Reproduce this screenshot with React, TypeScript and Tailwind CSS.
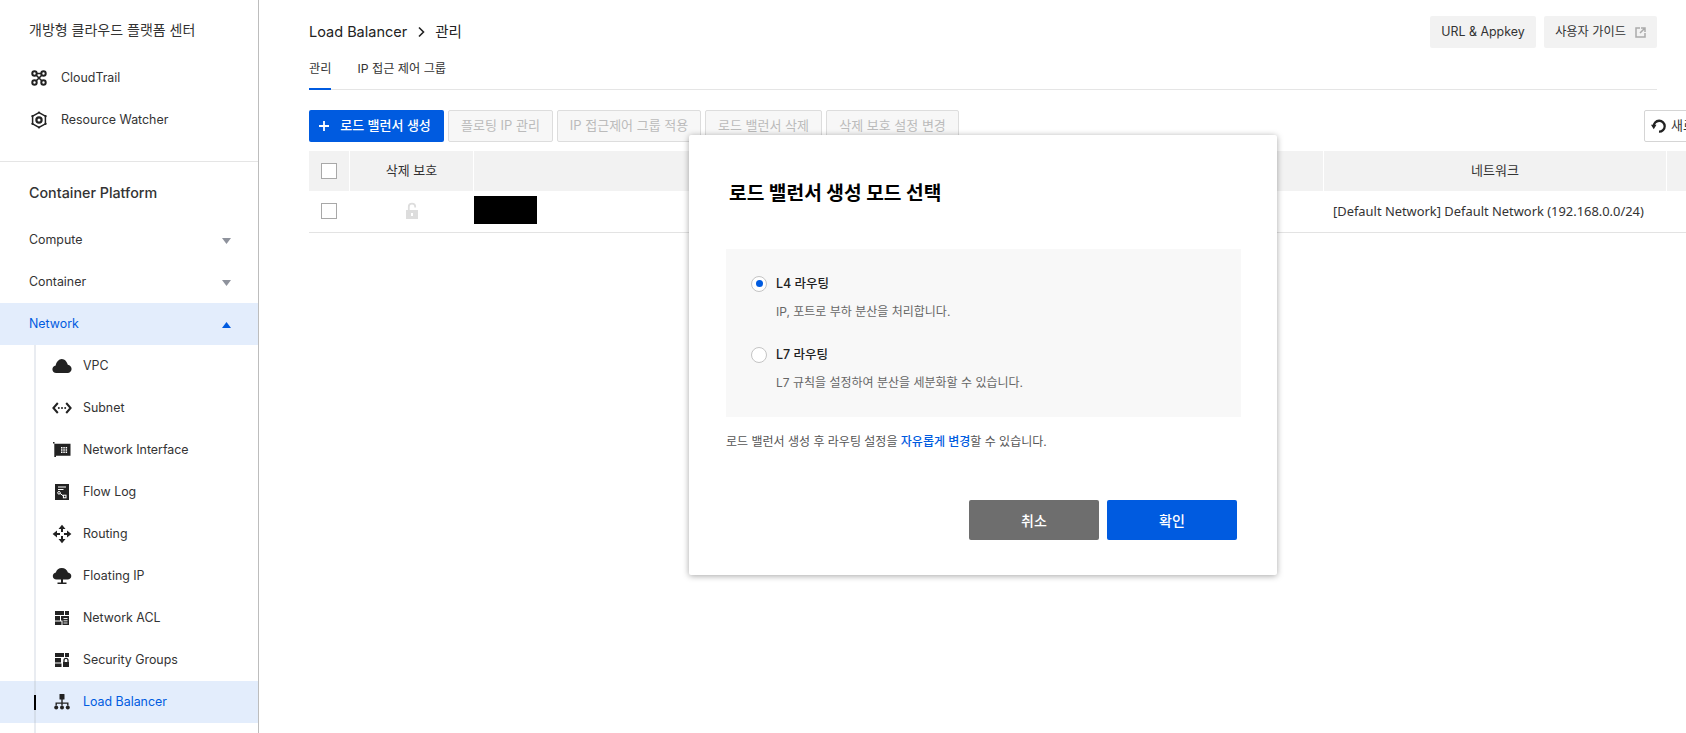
import type { ReactNode } from "react";

const FONT = "font-['Inter','Noto_Sans_CJK_KR',sans-serif]";

const ink = "#222222";

function CloudTrailIcon() {
  return (
    <svg width="18" height="18" viewBox="0 0 18 18" fill="none" stroke={ink} strokeWidth="2">
      <circle cx="4.500" cy="4.500" r="2.200" />
      <circle cx="13.500" cy="4.500" r="2.200" />
      <circle cx="4.500" cy="13.500" r="2.200" />
      <circle cx="13.500" cy="13.500" r="2.200" />
      <path d="M6.500 4.500h5M6 12l6-6M6 6l6 6" strokeWidth="1.600" />
    </svg>
  );
}

function WatcherIcon() {
  return (
    <svg width="18" height="18" viewBox="0 0 18 18" fill="none" stroke={ink}>
      <path d="M9 1.600 15.400 5.200v7.600L9 16.400 2.600 12.800V5.200z" strokeWidth="1.500" />
      <circle cx="9" cy="9" r="2.600" strokeWidth="2.200" />
      <circle cx="9" cy="1.500" r="1.100" fill={ink} stroke="none" />
      <circle cx="9" cy="16.500" r="1.100" fill={ink} stroke="none" />
      <circle cx="2.400" cy="5.200" r="1.100" fill={ink} stroke="none" />
      <circle cx="15.600" cy="5.200" r="1.100" fill={ink} stroke="none" />
      <circle cx="2.400" cy="12.800" r="1.100" fill={ink} stroke="none" />
      <circle cx="15.600" cy="12.800" r="1.100" fill={ink} stroke="none" />
    </svg>
  );
}

function CloudIcon() {
  return (
    <svg width="20" height="18" viewBox="0 0 20 18" fill={ink}>
      <path d="M4.200 16C2 16 .4 14.300.4 12.200c0-2 1.400-3.500 3.300-3.800C4.200 5.200 6.800 2 9.800 2c3 0 5.300 2.900 6 5.800 2.200.3 3.800 2 3.800 4.200 0 2.300-1.800 4-4 4z" />
    </svg>
  );
}

function SubnetIcon() {
  return (
    <svg width="20" height="18" viewBox="0 0 20 18" fill="none" stroke={ink} strokeWidth="2">
      <path d="M5.800 4 1.400 9l4.400 5M14.200 4l4.400 5-4.400 5" />
      <circle cx="6.800" cy="9" r="1" fill={ink} stroke="none" />
      <circle cx="10" cy="9" r="1" fill={ink} stroke="none" />
      <circle cx="13.200" cy="9" r="1" fill={ink} stroke="none" />
    </svg>
  );
}

function InterfaceIcon() {
  return (
    <svg width="18" height="18" viewBox="0 0 18 18">
      <path d="M0 1h1.500v1.700H17.500v12H3v1.300H1.300V2.500H0z" fill={ink} />
      <path
        d="M8 6h1.500v1.500H8zM10.300 6h1.500v1.500h-1.500zM12.600 6h1.500v1.500h-1.500zM8 8.200h1.500v1.500H8zM10.300 8.200h1.500v1.500h-1.500zM12.600 8.200h1.500v1.500h-1.500zM8 10.400h1.500v1.500H8zM10.300 10.400h1.500v1.500h-1.500zM12.600 10.400h1.500v1.500h-1.500z"
        fill="#ffffff"
      />
    </svg>
  );
}

function FlowLogIcon() {
  return (
    <svg width="18" height="18" viewBox="0 0 18 18">
      <rect x="2" y="1" width="14" height="16" fill={ink} />
      <path d="M5 4h8M5 6.500h5.500" stroke="#ffffff" strokeWidth="1.100" />
      <path d="M6 9.500 11 13.500" stroke="#ffffff" strokeWidth="1" />
      <circle cx="6" cy="9.800" r="1.300" fill={ink} stroke="#ffffff" />
      <rect x="10.400" y="12.200" width="2.600" height="2.600" fill={ink} stroke="#ffffff" />
    </svg>
  );
}

function RoutingIcon() {
  return (
    <svg width="20" height="20" viewBox="0 0 20 20" fill={ink}>
      <path d="M10 .8 13.500 5h-7zM10 19.200 6.500 15h7zM.6 10 5 6.500v7zM19.400 10 15 13.500v-7z" />
      <path d="M9 4h2v4H9zM9 12h2v4H9zM4 9h4v2H4zM12 9h4v2h-4z" />
    </svg>
  );
}

function FloatingIpIcon() {
  return (
    <svg width="20" height="18" viewBox="0 0 20 18" fill={ink}>
      <path d="M4.500 12.500C2.300 12.500.8 11 .8 9c0-1.900 1.300-3.300 3-3.600C4.400 3 6.800 1 9.800 1s5.400 2 6.100 4.400c1.900.2 3.400 1.700 3.400 3.600 0 2-1.600 3.500-3.700 3.500z" />
      <path d="M9 12h2v3.500H9zM5.500 15.500h9V17h-9z" />
    </svg>
  );
}

function AclIcon() {
  return (
    <svg width="18" height="18" viewBox="0 0 18 18" fill={ink}>
      <path d="M2 2h9v4H2zM12 2h4v4h-4zM2 7h5v4.500H2zM2 12.500h6.500V16H2z" />
      <path d="M8 7h8v9h-6.500v-4.500H8z" />
      <path d="M10.500 9.500h4M10.500 11.800h4M10.500 14h4" stroke="#ffffff" strokeWidth=".9" />
    </svg>
  );
}

function SecurityIcon() {
  return (
    <svg width="18" height="18" viewBox="0 0 18 18" fill={ink}>
      <path d="M2 2h9v4H2zM12 2h4v4h-4zM2 7h6v4.500H2zM2 12.500h6.500V16H2z" />
      <rect x="10" y="11" width="6" height="5" />
      <path d="M11 11V9.300c0-1.200.9-2 2-2s2 .8 2 2V11" fill="none" stroke={ink} strokeWidth="1.300" />
    </svg>
  );
}

function BalancerIcon() {
  return (
    <svg width="18" height="18" viewBox="0 0 18 18" fill={ink}>
      <rect x="6.500" y="1" width="5" height="5.500" rx=".6" />
      <path d="M8.300 6h1.400v3.500h5.800v3h-1.400v-1.700H9.700v1.700H8.300v-1.700H3.900v1.700H2.500v-3h5.800z" />
      <circle cx="3.200" cy="14.500" r="2" />
      <circle cx="9" cy="14.500" r="2" />
      <circle cx="14.800" cy="14.500" r="2" />
    </svg>
  );
}

function Caret({ up, color }: { up?: boolean; color: string }) {
  return (
    <svg width="9" height="6" viewBox="0 0 9 6" fill={color}>
      <path d={up ? "M4.500 0 9 6H0z" : "M0 0h9L4.500 6z"} />
    </svg>
  );
}

function Checkbox() {
  return <span className="block h-[16px] w-[16px] border border-[#a8a8a8] bg-white" />;
}

function MenuRow({ label, open, active }: { label: string; open?: boolean; active?: boolean }) {
  return (
    <div
      className={`flex h-[42px] items-center justify-between pl-[29px] pr-[27px] pt-[1px] text-[12.4px] ${
        active ? "bg-[#e3edfc] text-[#005be0]" : "text-[#333333]"
      }`}
    >
      <span>{label}</span>
      <Caret up={open} color={active ? "#005be0" : "#8e929c"} />
    </div>
  );
}

function SubRow({ icon, label, active }: { icon: ReactNode; label: string; active?: boolean }) {
  return (
    <div className={`relative flex h-[42px] pl-[34px] ${active ? "bg-[#e3edfc]" : ""}`}>
      <div
        className={`flex h-full items-center border-l-2 ${
          active ? "border-[#d5deea] text-[#005be0]" : "border-[#e9ecf1] text-[#333333]"
        } text-[12.4px]`}
      >
        <span className="flex w-[47px] items-center justify-center pl-[4px]">{icon}</span>
        <span>{label}</span>
      </div>
      {active && <span className="absolute left-[34px] top-[14px] h-[15px] w-[2px] bg-black" />}
    </div>
  );
}

function Sidebar() {
  return (
    <aside className="h-[733px] w-[259px] shrink-0 overflow-hidden border-r border-[#bdbdbd]">
      <div className="h-[57px] pl-[29px] pt-[20px] text-[14px] leading-[20px] text-[#333333]">
        개방형 클라우드 플랫폼 센터
      </div>
      <div className="flex h-[42px] items-center text-[12.4px] text-[#333333]">
        <span className="flex w-[61px] justify-center pl-[17px]">
          <CloudTrailIcon />
        </span>
        CloudTrail
      </div>
      <div className="flex h-[42px] items-center text-[12.4px] text-[#333333]">
        <span className="flex w-[61px] justify-center pl-[17px]">
          <WatcherIcon />
        </span>
        Resource Watcher
      </div>
      <div className="mt-[20px] h-px bg-[#e5e5e5]" />
      <div className="h-[57px] pl-[29px] pt-[20px] text-[14.3px] font-medium leading-[22px] text-[#333333]">
        Container Platform
      </div>
      <MenuRow label="Compute" />
      <MenuRow label="Container" />
      <MenuRow label="Network" open active />
      <SubRow icon={<CloudIcon />} label="VPC" />
      <SubRow icon={<SubnetIcon />} label="Subnet" />
      <SubRow icon={<InterfaceIcon />} label="Network Interface" />
      <SubRow icon={<FlowLogIcon />} label="Flow Log" />
      <SubRow icon={<RoutingIcon />} label="Routing" />
      <SubRow icon={<FloatingIpIcon />} label="Floating IP" />
      <SubRow icon={<AclIcon />} label="Network ACL" />
      <SubRow icon={<SecurityIcon />} label="Security Groups" />
      <SubRow icon={<BalancerIcon />} label="Load Balancer" active />
      <SubRow icon={null} label="" />
    </aside>
  );
}

function DisabledButton({ label, width }: { label: string; width: string }) {
  return (
    <button
      className={`h-[32px] rounded-[2px] border border-[#dddddd] bg-[#f7f7f7] text-[13px] text-[#bbbbbb] ${width}`}
    >
      {label}
    </button>
  );
}

function Table() {
  return (
    <div className="mt-[9px] w-[1500px]">
      <div className="flex h-[40px] items-center gap-px text-[13px] text-[#333333]">
        <div className="flex h-full w-[40px] items-center justify-center bg-[#f2f2f2]">
          <Checkbox />
        </div>
        <div className="flex h-full w-[123px] items-center justify-center bg-[#f2f2f2]">삭제 보호</div>
        <div className="h-full w-[849px] bg-[#f2f2f2]" />
        <div className="flex h-full w-[342px] items-center justify-center bg-[#f2f2f2]">네트워크</div>
        <div className="h-full flex-1 bg-[#f2f2f2]" />
      </div>
      <div className="flex h-[42px] items-center gap-px border-b border-[#e3e3e3] text-[13px] text-[#333333]">
        <div className="mb-[2px] flex w-[40px] justify-center">
          <Checkbox />
        </div>
        <div className="mb-[1px] flex w-[123px] justify-center">
          <svg width="16" height="18" viewBox="0 0 16 18" fill="#dddddd">
            <path d="M2 8h12v9H2z" />
            <path d="M4.800 8V4.800C4.800 3 6.200 1.700 8 1.700s3.200 1.300 3.200 3.100v.7" fill="none" stroke="#dddddd" strokeWidth="1.800" />
            <rect x="7" y="11" width="2" height="3" fill="#ffffff" />
          </svg>
        </div>
        <div className="h-full w-[849px] pt-[5px]">
          <div className="h-[28px] w-[63px] bg-black" />
        </div>
        <div className="w-[342px] pl-[9px] pt-[1px] font-['Noto_Sans','Noto_Sans_CJK_KR',sans-serif] text-[12.9px]">
          [Default Network] Default Network (192.168.0.0/24)
        </div>
      </div>
    </div>
  );
}

function Radio({ checked }: { checked?: boolean }) {
  return (
    <span className="flex h-[16px] w-[16px] items-center justify-center rounded-full border border-[#c4c4c4] bg-white">
      {checked && <span className="h-[7px] w-[7px] rounded-full bg-[#005be0]" />}
    </span>
  );
}

function RoutingOption({ title, desc, checked }: { title: string; desc: string; checked?: boolean }) {
  return (
    <div>
      <div className="flex items-center gap-[9px] text-[12.5px] font-medium leading-[20px] text-[#222222]">
        <Radio checked={checked} />
        {title}
      </div>
      <p className="mt-[8px] pl-[25px] text-[12px] leading-[20px] text-[#666666]">{desc}</p>
    </div>
  );
}

function Modal() {
  return (
    <div className="absolute left-[689px] top-[135px] flex h-[440px] w-[588px] flex-col rounded-[2px] bg-white pl-[37px] pr-[36px] shadow-[0_1px_6px_rgba(0,0,0,0.35)]">
      <h2 className="mt-[43px] pl-[3px] text-[19.2px] font-bold leading-[30px] text-black">로드 밸런서 생성 모드 선택</h2>
      <div className="mt-[41px] flex h-[168px] flex-col justify-center gap-[23px] bg-[#f8f8f8] pl-[25px]">
        <RoutingOption title="L4 라우팅" desc="IP, 포트로 부하 분산을 처리합니다." checked />
        <RoutingOption title="L7 라우팅" desc="L7 규칙을 설정하여 분산을 세분화할 수 있습니다." />
      </div>
      <p className="mt-[15px] text-[12px] leading-[20px] text-[#555555]">
        로드 밸런서 생성 후 라우팅 설정을 <span className="font-medium text-[#005be0]">자유롭게 변경</span>할 수 있습니다.
      </p>
      <div className="mt-[48px] flex justify-end gap-[8px] pr-[4px]">
        <button className="h-[40px] w-[130px] rounded-[2px] bg-[#6e6e6e] text-[14px] font-medium text-white">취소</button>
        <button className="h-[40px] w-[130px] rounded-[2px] bg-[#005be0] text-[14px] font-medium text-white">확인</button>
      </div>
    </div>
  );
}

export default function App() {
  return (
    <div className={`relative flex h-[733px] w-[1686px] overflow-hidden bg-white ${FONT}`}>
      <Sidebar />
      <main className="min-w-0 flex-1 overflow-hidden pl-[50px]">
        <div className="w-[1348px]">
          <div className="flex h-[48px] items-end justify-between">
            <div className="flex items-center pb-[5px] text-[14.5px] leading-[22px] text-[#222222]">
              Load Balancer
              <svg className="mx-[8px]" width="12" height="12" viewBox="0 0 12 12" fill="none" stroke="#222222" strokeWidth="1.600">
                <path d="M4 1.500 8.500 6 4 10.500" />
              </svg>
              관리
            </div>
            <div className="flex gap-[8px]">
              <button className="h-[32px] w-[106px] rounded-[2px] bg-[#f2f2f2] text-[12.4px] text-[#333333]">URL &amp; Appkey</button>
              <button className="flex h-[32px] w-[113px] items-center justify-center gap-[9px] rounded-[2px] bg-[#f2f2f2] text-[12.2px] text-[#333333]">
                사용자 가이드
                <svg width="11" height="11" viewBox="0 0 11 11" fill="none" stroke="#aaaaaa" strokeWidth="1.500">
                  <path d="M5 1H1v9h9V6M6 1h4v4M10 1 5 6" />
                </svg>
              </button>
            </div>
          </div>
          <div className="flex h-[42px] gap-[26px] border-b border-[#e5e5e5] pt-[11px] text-[12.2px] leading-[20px] text-[#333333]">
            <div className="relative">
              관리
              <span className="absolute bottom-[-1px] left-0 h-[2px] w-full bg-[#005be0]" />
            </div>
            <div>IP 접근 제어 그룹</div>
          </div>
        </div>
        <div className="mt-[20px] flex w-[1405px] justify-between">
          <div className="flex gap-[4px]">
            <button className="flex h-[32px] w-[135px] items-center justify-center gap-[11px] rounded-[2px] bg-[#005be0] pr-[3px] text-[13px] font-medium text-white">
              <svg width="10" height="10" viewBox="0 0 10 10" stroke="#ffffff" strokeWidth="1.800">
                <path d="M5 0v10M0 5h10" />
              </svg>
              로드 밸런서 생성
            </button>
            <DisabledButton label="플로팅 IP 관리" width="w-[105px]" />
            <DisabledButton label="IP 접근제어 그룹 적용" width="w-[144px]" />
            <DisabledButton label="로드 밸런서 삭제" width="w-[117px]" />
            <DisabledButton label="삭제 보호 설정 변경" width="w-[133px]" />
          </div>
          <button className="flex h-[32px] w-[70px] items-center gap-[4px] whitespace-nowrap rounded-[2px] border border-[#d5d5d5] bg-white pl-[6px] text-[13px] text-[#333333]">
            <svg className="shrink-0" width="16" height="16" viewBox="0 0 14 14" fill="none" stroke="#222222" strokeWidth="2">
              <path d="M2.400 7.500A4.800 4.800 0 1 1 7 12" />
              <path d="M0 6h4.800L2.400 9.800z" fill="#222222" stroke="none" />
            </svg>
            새로고침
          </button>
        </div>
        <Table />
      </main>
      <Modal />
    </div>
  );
}
